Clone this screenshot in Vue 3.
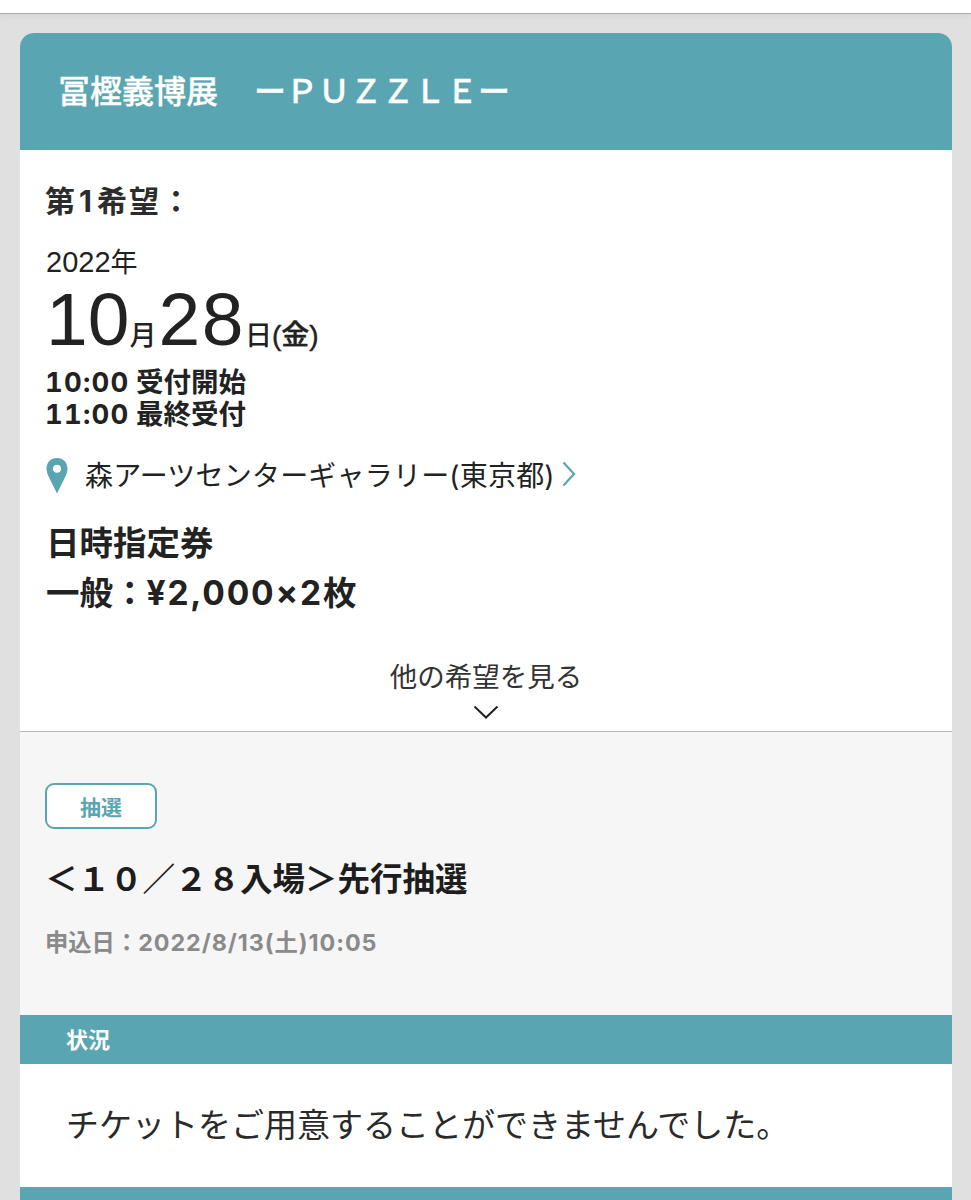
<template>
  <div class="page">
    <div class="topbar"></div>
    <main class="card">
      <header class="head">
        <h1>冨樫義博展<span class="gap"></span><span class="sub">ーＰＵＺＺＬＥー</span></h1>
      </header>
      <section class="detail">
        <h2 class="wish">第<span class="one">1</span>希望：</h2>
        <div class="year"><span class="yr">2022</span>年</div>
        <div class="date"><span class="big">10</span><span class="unit">月</span><span class="big">28</span><span class="unit">日</span><span class="dow">(金)</span></div>
        <div class="times">
          <div><span class="num">10:00</span> 受付開始</div>
          <div><span class="num">11:00</span> 最終受付</div>
        </div>
        <div class="venue">
          <svg class="pin" viewBox="0 0 22 36" width="22" height="36">
            <path fill-rule="evenodd" fill="#5aa5b2" d="M11 0C4.8 0 .5 4.6.5 10.6c0 3.4 1.2 6 2.8 9.3L11 35.5l7.7-15.6c1.6-3.3 2.8-5.9 2.8-9.3C21.500 4.600 17.200 0 11 0Zm0 6.700a4 4 0 1 1 0 8 4 4 0 0 1 0-8Z"/>
          </svg>
          <span class="venue-name">森アーツセンターギャラリー(東京都)</span>
          <svg class="chev" viewBox="0 0 14 26" width="14" height="26">
            <path d="M1.500 1.500 12 13 1.500 24.500" fill="none" stroke="#5aa5b2" stroke-width="2.200"/>
          </svg>
        </div>
        <div class="ticket">
          <div>日時指定券</div>
          <div>一般：<span class="amount">¥2,000×2</span>枚</div>
        </div>
        <div class="more">
          <span>他の希望を見る</span>
          <svg viewBox="0 0 26 14" width="26" height="14">
            <path d="M1.500 1.500 13 12.500 24.500 1.500" fill="none" stroke="#222" stroke-width="2"/>
          </svg>
        </div>
      </section>
      <section class="entry">
        <div class="tag">抽選</div>
        <h3>＜１０／２８入場＞先行抽選</h3>
        <p class="applied">申込日：<span class="stamp">2022/8/13(土)10:05</span></p>
      </section>
      <div class="label">状況</div>
      <p class="status">チケットをご用意することができませんでした。</p>
      <div class="label"></div>
    </main>
  </div>
</template>

<script setup>
</script>

<style>
html, body { margin: 0; background: #e0e0e0; }
</style>

<style scoped>
.page {
  width: 971px;
  height: 1200px;
  overflow: hidden;
  background: #e0e0e0;
  font-family: "Inter", "Noto Sans CJK JP", sans-serif;
  color: #222;
}
.topbar {
  height: 13px;
  background: #fff;
  border-bottom: 1px solid #ababab;
  box-shadow: 0 1px 8px rgba(0, 0, 0, 0.07);
  margin-bottom: 19px;
}
.card {
  margin: 0 19px 0 20px;
  background: #fff;
  border-radius: 14px 14px 0 0;
  overflow: hidden;
}
.head {
  height: 117px;
  background: #5aa5b2;
  display: flex;
  align-items: center;
  padding-left: 38px;
}
h1 {
  margin: 0;
  color: #fff;
  font-size: 32px;
  line-height: 40px;
  font-weight: 500;
  -webkit-text-stroke: 0.3px #fff;
  white-space: nowrap;
  display: flex;
  align-items: center;
}
.gap { width: 36px; }
.sub { font-weight: 500; }
.detail {
  height: 582px;
  padding: 30px 0 0 26px;
  box-sizing: border-box;
  border-bottom: 1px solid #b9b9b9;
  position: relative;
}
.wish {
  margin: 0 0 0 -1px;
  font-size: 30px;
  line-height: 42px;
  font-weight: 700;
  color: #2c2c2c;
  letter-spacing: 2px;
}
.one { margin: 0 3px 0 2px; }
.year {
  margin-top: 20px;
  font-size: 27px;
  line-height: 40px;
}
.yr, .big, .dow { font-family: "Liberation Sans", "Noto Sans CJK JP", sans-serif; }
.yr { font-size: 29px; }
.date {
  display: flex;
  align-items: baseline;
  height: 70px;
  line-height: 70px;
  margin-top: 1px;
}
.big { font-size: 75px; }
.big + .unit + .big { margin-left: 2px; letter-spacing: 1.500px; }
.unit { font-size: 27px; font-weight: 500; }
.dow { font-size: 28px; font-weight: 500; -webkit-text-stroke: 0.4px #222; }
.times {
  margin: 12px 0 0 -1px;
  font-size: 27.500px;
  line-height: 32px;
  font-weight: 700;
}
.num { letter-spacing: 1.200px; font-variant-numeric: tabular-nums; }
.venue {
  display: flex;
  align-items: center;
  margin-top: 24px;
  height: 40px;
  font-size: 28px;
}
.pin { margin: 3px 17px 0 0; flex: none; }
.chev { margin-left: 7px; flex: none; }
.venue-name { letter-spacing: 0.2px; white-space: nowrap; }
.ticket {
  margin-top: 24px;
  font-size: 33.500px;
  line-height: 50px;
  font-weight: 700;
}
.amount { letter-spacing: 1.800px; }
.more {
  position: absolute;
  left: 0;
  right: 0;
  bottom: 12px;
  display: flex;
  flex-direction: column;
  align-items: center;
  gap: 11px;
  font-size: 27.500px;
  line-height: 34px;
  color: #333;
}
.entry {
  height: 283px;
  box-sizing: border-box;
  background: #f6f6f6;
  padding: 51px 0 0 25px;
}
.tag {
  width: 112px;
  height: 46px;
  box-sizing: border-box;
  border: 2.500px solid #5aa5b2;
  border-radius: 9px;
  background: #fff;
  color: #5aa5b2;
  font-size: 21px;
  font-weight: 700;
  display: flex;
  align-items: center;
  justify-content: center;
}
h3 {
  margin: 27px 0 0;
  font-size: 32.500px;
  line-height: 48px;
  font-weight: 700;
  color: #1d1d1d;
  white-space: nowrap;
}
.applied {
  margin: 22px 0 0;
  font-size: 23.300px;
  line-height: 34px;
  font-weight: 700;
  color: #8a8a8a;
}
.stamp { letter-spacing: 0.950px; }
.label {
  height: 49px;
  background: #5aa5b2;
  color: #fff;
  font-size: 22px;
  font-weight: 700;
  line-height: 50px;
  padding-left: 46px;
}
.status {
  margin: 0;
  height: 123px;
  line-height: 123px;
  padding-left: 46px;
  font-size: 33px;
  color: #2a2a2a;
  white-space: nowrap;
}
</style>
